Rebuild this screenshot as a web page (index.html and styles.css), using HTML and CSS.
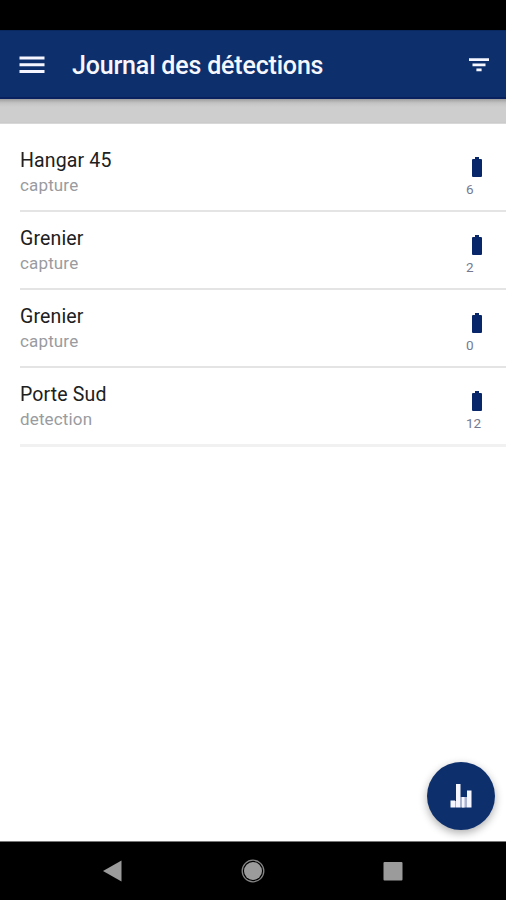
FILE: index.html
```html
<!DOCTYPE html>
<html lang="fr">
<head>
<meta charset="utf-8">
<title>Journal des détections</title>
<link rel="stylesheet" href="styles.css">
</head>
<body>
<div class="screen">
  <div class="status"></div>
  <header class="bar">
    <svg class="menu" viewBox="0 0 26 18"><path d="M0.5 0.5h25v3h-25zM0.5 7.2h25v3h-25zM0.5 14h25v3h-25z"/></svg>
    <h1>Journal des détections</h1>
    <svg class="filter" viewBox="0 0 20 14"><path d="M0 .2h20v2.8H0zM3.500 5.400h13v2.800h-13zM7.400 10.500h5.200v2.800H7.400z"/></svg>
  </header>
  <div class="strip"></div>
  <main>
    <ul class="list">
      <li><div class="text"><p class="name">Hangar 45</p><p class="kind">capture</p></div><div class="level"><svg viewBox="0 0 10 20"><path d="M3 0h4v2h2q1 0 1 1v16q0 1-1 1H1q-1 0-1-1V3q0-1 1-1h2z"/></svg><span>6</span></div></li>
      <li><div class="text"><p class="name">Grenier</p><p class="kind">capture</p></div><div class="level"><svg viewBox="0 0 10 20"><path d="M3 0h4v2h2q1 0 1 1v16q0 1-1 1H1q-1 0-1-1V3q0-1 1-1h2z"/></svg><span>2</span></div></li>
      <li><div class="text"><p class="name">Grenier</p><p class="kind">capture</p></div><div class="level"><svg viewBox="0 0 10 20"><path d="M3 0h4v2h2q1 0 1 1v16q0 1-1 1H1q-1 0-1-1V3q0-1 1-1h2z"/></svg><span>0</span></div></li>
      <li><div class="text"><p class="name">Porte Sud</p><p class="kind">detection</p></div><div class="level"><svg viewBox="0 0 10 20"><path d="M3 0h4v2h2q1 0 1 1v16q0 1-1 1H1q-1 0-1-1V3q0-1 1-1h2z"/></svg><span>12</span></div></li>
    </ul>
    <button class="fab" aria-label="Statistiques"><svg viewBox="0 0 22 24"><path class="short" d="M5 17h1v6.500H5zM10.500 13H17v10.500h-6.500z"/><path class="tall" d="M6 0h4.500v23.500H6zM17 6.500h4.500v17H17zM.5 16.500H5v7H.5zM12 13h2.500v10.500H12z"/></svg></button>
  </main>
  <nav class="nav">
    <svg viewBox="0 0 24 24"><path d="M2 12 20.500 1.500v21z"/></svg>
    <svg viewBox="0 0 24 24"><circle cx="12" cy="12" r="9"/><circle class="ring" cx="12" cy="12" r="10.800"/></svg>
    <svg viewBox="0 0 24 24"><rect x="2.500" y="3" width="19" height="18.500" rx="1"/></svg>
  </nav>
</div>
</body>
</html>
```
FILE: styles.css
```css
* { box-sizing: border-box; margin: 0; padding: 0; }
body { font-family: Roboto, "Liberation Sans", sans-serif; background: #fff; }
.screen { width: 506px; height: 900px; display: flex; flex-direction: column; overflow: hidden; }
.status { height: 30px; background: #000; }
.bar { height: 69px; background: #0d306d; border-bottom: 2px solid #09215f; border-top: 1px solid #0a2860; display: flex; align-items: center; padding: 2px 17px 0 19px; }
.bar svg { fill: #f5f6ff; }
.menu { width: 26px; height: 18px; }
.filter { width: 20px; height: 14px; margin-left: auto; }
h1 { font-size: 25px; line-height: 30px; font-weight: 500; color: #f6f7ff; margin-left: 27px; padding-top: 1px; letter-spacing: -.18px; white-space: nowrap; }
.strip { height: 25px; background: linear-gradient(#9d9d9d 0, #c3c3c3 4px, #cecece 8px, #cecece 23px, #c8c8c8 24px, #e8e8e8 25px); }
main { flex: 1; position: relative; padding: 10px 0 0 20px; }
.list { list-style: none; }
li { height: 78px; border-bottom: 2px solid #e4e4e5; display: flex; justify-content: space-between; padding: 14px 24px 0 0; }
li:last-child { height: 79px; border-bottom: 3px solid #f1f1f1; }
.name { font-size: 19.500px; line-height: 26px; color: #202020; letter-spacing: .15px; }
.kind { font-size: 17px; line-height: 22px; color: #999b9f; letter-spacing: .15px; }
.level { width: 16px; padding-top: 9px; display: flex; flex-direction: column; }
.level svg { width: 10px; height: 20px; margin-left: 6px; fill: #08276b; }
.level span { font-size: 13.500px; line-height: 16px; margin-top: 4px; color: #747991; }
.fab { position: absolute; right: 11px; bottom: 11px; width: 68px; height: 68px; border: 0; border-radius: 50%; background: #0d306d; box-shadow: 0 3px 8px rgba(0,0,0,.32); display: flex; align-items: center; justify-content: center; }
.fab svg { width: 22px; height: 24px; }
.tall { fill: #f5f6ff; }
.short { fill: #aab3d0; }
.nav { height: 59px; background: #000; border-top: 1px solid #777; display: flex; justify-content: space-between; align-items: center; padding: 0 101px; }
.nav svg { width: 24px; height: 24px; fill: #9b9b9b; }
.ring { fill: none; stroke: #858585; stroke-width: 1.300px; }
```
